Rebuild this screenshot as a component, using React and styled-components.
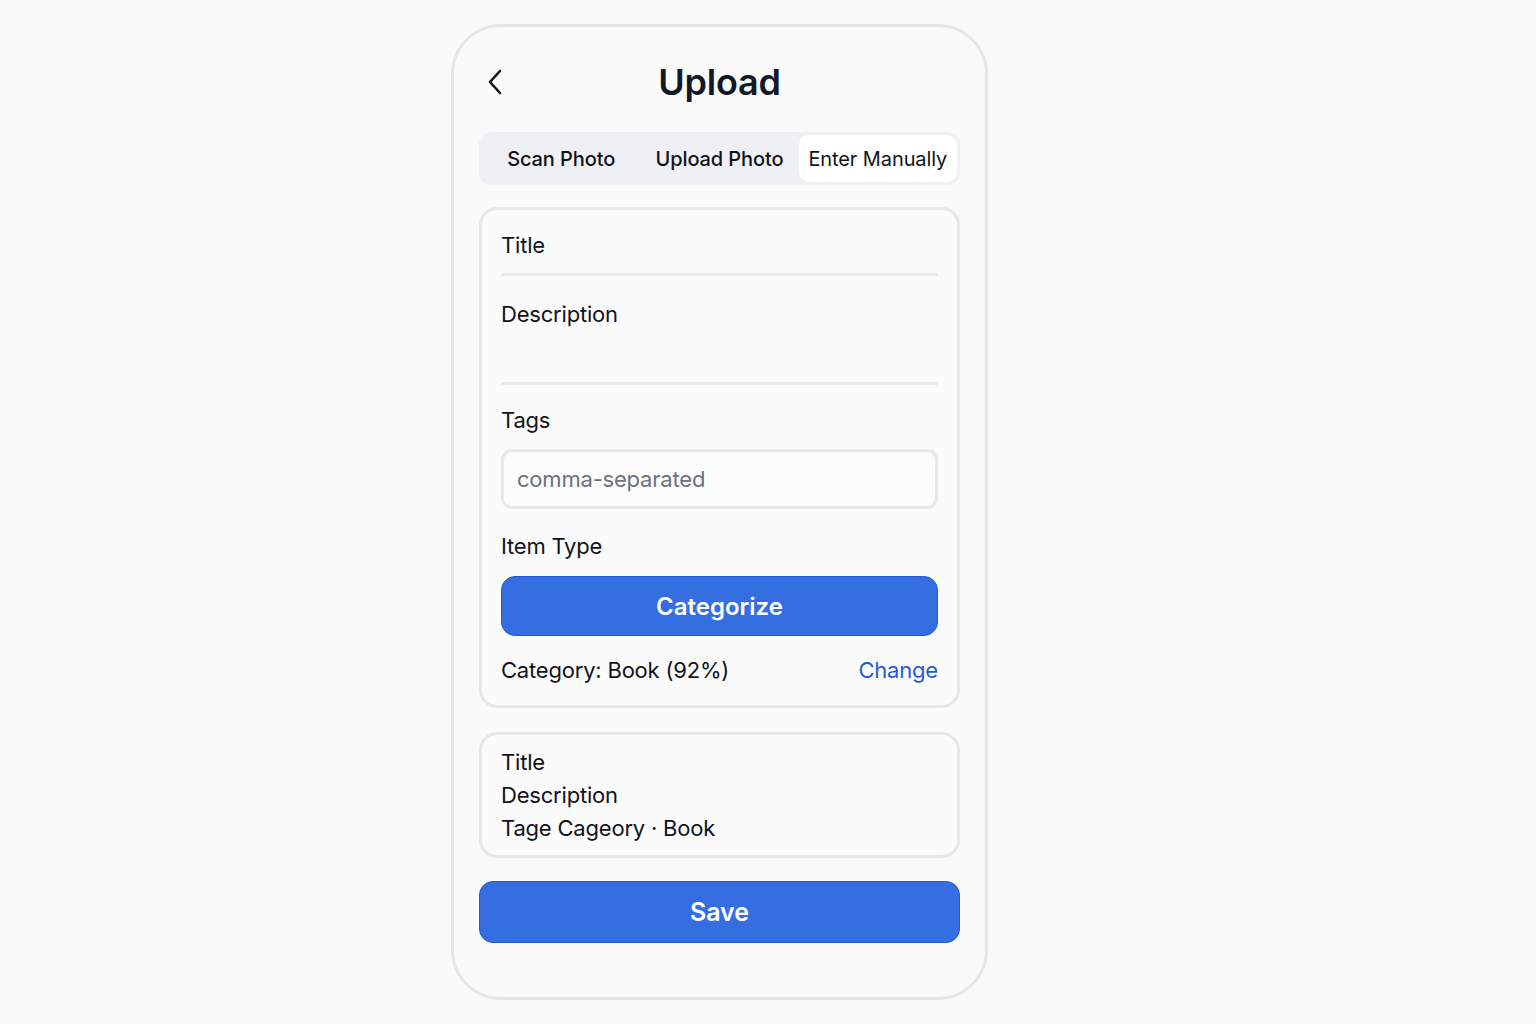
import React from 'react'
import { styled, createGlobalStyle } from 'styled-components'

const GlobalStyle = createGlobalStyle`
  * { box-sizing: border-box; }
  body {
    margin: 0;
    background: #fafafa;
    font-family: Inter, "Noto Sans", sans-serif;
    color: #111318;
  }
`

const App = () => {
  return (
    <>
      <GlobalStyle />
      <Page>
        <Phone>
          <Header>
            <BackBtn aria-label="Back">
              <svg width="16" height="26" viewBox="0 0 16 26" fill="none">
                <polyline points="13,2 3,13 13,24" stroke="#111318" strokeWidth="2.6" strokeLinecap="round" strokeLinejoin="round" />
              </svg>
            </BackBtn>
            <PageTitle>Upload</PageTitle>
            <span />
          </Header>

          <Tabs>
            <Tab>Scan Photo</Tab>
            <Tab>Upload Photo</Tab>
            <Tab $active>Enter Manually</Tab>
          </Tabs>

          <FormCard>
            <Label>Title</Label>
            <Divider $top={13} />
            <Label $top={23}>Description</Label>
            <Divider $top={53} />
            <Label $top={20}>Tags</Label>
            <TagInput placeholder="comma-separated" />
            <Label $top={22}>Item Type</Label>
            <PrimaryButton $top={15} $height={60} $size={24}>Categorize</PrimaryButton>
            <CategoryRow>
              <span>Category: Book (92%)</span>
              <ChangeLink href="#">Change</ChangeLink>
            </CategoryRow>
          </FormCard>

          <PreviewCard>
            <PreviewLine>Title</PreviewLine>
            <PreviewLine>Description</PreviewLine>
            <PreviewLine>Tage Cageory · Book</PreviewLine>
          </PreviewCard>

          <PrimaryButton $top={23} $height={62} $size={25}>Save</PrimaryButton>
        </Phone>
      </Page>
    </>
  )
}

export default App

const Page = styled.div`
  display: flex;
  justify-content: flex-start;
  padding-top: 24px;
  padding-left: 451px;
  min-height: 1024px;
`

const Phone = styled.div`
  width: 537px;
  display: flex;
  flex-direction: column;
  padding: 27px 25px 54px;
  border: 3px solid #e5e6e9;
  border-radius: 50px;
  background: #fafafa;
  align-self: flex-start;
`

const Header = styled.div`
  display: grid;
  grid-template-columns: 1fr auto 1fr;
  align-items: center;
  height: 56px;
`

const BackBtn = styled.button`
  background: transparent;
  border: none;
  padding: 0;
  margin-left: 8px;
  width: 20px;
  display: flex;
  align-items: center;
  cursor: pointer;
`

const PageTitle = styled.h1`
  margin: 0;
  font-size: 36px;
  font-weight: 600;
  letter-spacing: -0.2px;
  color: #111827;
`

const Tabs = styled.div`
  margin-top: 22px;
  height: 53px;
  padding: 3px;
  display: grid;
  grid-template-columns: repeat(3, 1fr);
  background: #eef0f3;
  border-radius: 12px;
`

const Tab = styled.button`
  border: none;
  border-radius: 10px;
  font-family: inherit;
  font-size: 20px;
  font-weight: ${p => (p.$active ? 400 : 500)};
  letter-spacing: -0.1px;
  color: #111318;
  background: ${p => (p.$active ? '#ffffff' : 'transparent')};
  padding: 0;
  cursor: pointer;
`

const FormCard = styled.div`
  margin-top: 22px;
  display: flex;
  flex-direction: column;
  padding: 20px 19px;
  border: 3px solid #e6e7ea;
  border-radius: 18px;
  background: #fbfbfc;
`

const Label = styled.div`
  margin-top: ${p => p.$top || 0}px;
  font-size: 22px;
  line-height: 30px;
  letter-spacing: -0.2px;
`

const Divider = styled.div`
  margin-top: ${p => p.$top}px;
  height: 3px;
  border-radius: 2px;
  background: #e8e9ec;
`

const TagInput = styled.input`
  margin-top: 14px;
  height: 60px;
  padding: 0 13px;
  border: 3px solid #e6e7ea;
  border-radius: 11px;
  background: #fcfcfd;
  font-family: inherit;
  font-size: 22px;
  letter-spacing: -0.2px;
  color: #111318;
  outline: none;

  &::placeholder {
    color: #6b7280;
  }
`

const PrimaryButton = styled.button`
  margin-top: ${p => p.$top}px;
  height: ${p => p.$height}px;
  border: 1px solid #1d5ad8;
  border-radius: 14px;
  background: #356ee0;
  color: #ffffff;
  font-family: inherit;
  font-size: ${p => p.$size}px;
  font-weight: 600;
  cursor: pointer;
`

const CategoryRow = styled.div`
  margin-top: 19px;
  display: flex;
  justify-content: space-between;
  font-size: 22px;
  line-height: 30px;
  letter-spacing: -0.2px;
`

const ChangeLink = styled.a`
  color: #1f5bd8;
  text-decoration: none;
`

const PreviewCard = styled.div`
  margin-top: 24px;
  padding: 11px 19px 10px;
  border: 3px solid #e6e7ea;
  border-radius: 18px;
  background: #fbfbfc;
`

const PreviewLine = styled.div`
  font-size: 22px;
  line-height: 33px;
  letter-spacing: -0.2px;
`
